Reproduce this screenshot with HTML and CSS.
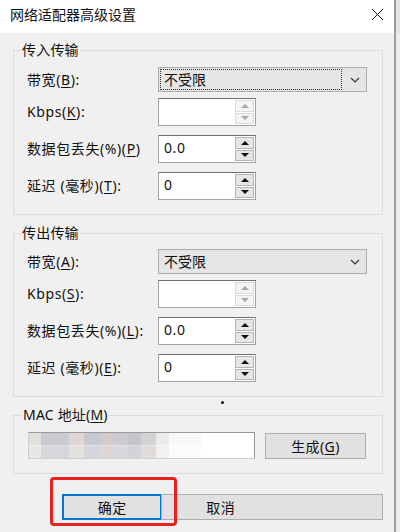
FILE: index.html
```html
<!DOCTYPE html>
<html lang="zh-CN">
<head>
    <meta charset="UTF-8">
    <meta name="viewport" content="width=device-width, initial-scale=1.0">
    <title>网络适配器高级设置</title>
    <link rel="stylesheet" href="styles.css">
</head>
<body>
    <div class="screen">
        <div class="dialog">
            <div class="titlebar">
                <span class="title">网络适配器高级设置</span>
                <svg class="close" width="13" height="13" viewBox="0 0 13 13">
                    <path d="M1 1 L12 12 M12 1 L1 12" stroke="#111" stroke-width="1" fill="none"/>
                </svg>
            </div>
            <div class="body">
                <fieldset class="group">
                    <legend>传入传输</legend>
                    <div class="rows">
                        <div class="row first">
                            <span class="lbl">带宽(<u>B</u>):</span>
                            <div class="select">
                                <span class="sel-text focus">不受限</span>
                                <svg class="chev" width="10" height="6" viewBox="0 0 10 6"><polyline points="1,1 5,5 9,1" fill="none" stroke="#333" stroke-width="1.2"/></svg>
                            </div>
                        </div>
                        <div class="row">
                            <span class="lbl">Kbps(<u>K</u>):</span>
                            <div class="spin off">
                                <span class="spin-val"></span>
                                <span class="spin-btns"><span><i class="up"></i></span><span><i class="down"></i></span></span>
                            </div>
                        </div>
                        <div class="row">
                            <span class="lbl">数据包丢失(%)(<u>P</u>)</span>
                            <div class="spin">
                                <span class="spin-val">0.0</span>
                                <span class="spin-btns"><span><i class="up"></i></span><span><i class="down"></i></span></span>
                            </div>
                        </div>
                        <div class="row">
                            <span class="lbl">延迟 (毫秒)(<u>T</u>):</span>
                            <div class="spin">
                                <span class="spin-val">0</span>
                                <span class="spin-btns"><span><i class="up"></i></span><span><i class="down"></i></span></span>
                            </div>
                        </div>
                    </div>
                </fieldset>

                <fieldset class="group second">
                    <legend>传出传输</legend>
                    <div class="rows">
                        <div class="row first">
                            <span class="lbl">带宽(<u>A</u>):</span>
                            <div class="select">
                                <span class="sel-text">不受限</span>
                                <svg class="chev" width="10" height="6" viewBox="0 0 10 6"><polyline points="1,1 5,5 9,1" fill="none" stroke="#333" stroke-width="1.2"/></svg>
                            </div>
                        </div>
                        <div class="row">
                            <span class="lbl">Kbps(<u>S</u>):</span>
                            <div class="spin off">
                                <span class="spin-val"></span>
                                <span class="spin-btns"><span><i class="up"></i></span><span><i class="down"></i></span></span>
                            </div>
                        </div>
                        <div class="row">
                            <span class="lbl">数据包丢失(%)(<u>L</u>):</span>
                            <div class="spin">
                                <span class="spin-val">0.0</span>
                                <span class="spin-btns"><span><i class="up"></i></span><span><i class="down"></i></span></span>
                            </div>
                        </div>
                        <div class="row">
                            <span class="lbl">延迟 (毫秒)(<u>E</u>):</span>
                            <div class="spin">
                                <span class="spin-val">0</span>
                                <span class="spin-btns"><span><i class="up"></i></span><span><i class="down"></i></span></span>
                            </div>
                        </div>
                    </div>
                </fieldset>

                <div class="dot"></div>

                <fieldset class="group mac">
                    <legend>MAC 地址(<u>M</u>)</legend>
                    <div class="mac-row">
                        <div class="mac-input"><span class="mac-blur"></span></div>
                        <button class="btn gen">生成(<u>G</u>)</button>
                    </div>
                </fieldset>

                <div class="actions">
                    <button class="btn ok">确定</button>
                    <button class="btn cancel">取消</button>
                    <div class="mark"></div>
                </div>
            </div>
        </div>
        <div class="edge"></div>
    </div>
</body>
</html>
```

FILE: styles.css
```css
html, body {
    margin: 0;
    padding: 0;
}
body {
    font-family: "Noto Sans", "Noto Sans CJK SC", sans-serif;
    font-size: 14px;
    color: #111;
    background: #f0f0f0;
}
.screen {
    display: flex;
    width: 400px;
    height: 532px;
    overflow: hidden;
}
.dialog {
    width: 394px;
    background: #f0f0f0;
}
.edge {
    flex: 1;
    border-left: 2px solid #9c9c9c;
    background: linear-gradient(#e4e4e4 0, #e4e4e4 33px, #ececec 33px);
}
.titlebar {
    height: 33px;
    background: #fff;
    display: flex;
    align-items: center;
    justify-content: space-between;
    padding: 0 10px 0 10px;
}
.title {
    font-size: 14px;
    line-height: 18px;
    margin-top: -3px;
}
.close {
    margin-top: -4px;
}
.body {
    padding: 0 11px 0 13px;
}
.group {
    margin: 8px 0 0 0;
    padding: 8px 13px 14px 13px;
    border: 1px solid #dcdcdc;
    min-width: 0;
}
.group legend {
    margin-left: -6px;
    padding: 0 1px;
    line-height: 18px;
    letter-spacing: 0.2px;
}
.group.second {
    margin-top: 9px;
    padding-top: 7px;
}
.rows {
    display: flex;
    flex-direction: column;
    gap: 9px;
}
.row {
    display: flex;
    align-items: center;
}
.row.first {
    margin-bottom: -3px;
}
.lbl {
    width: 131px;
    white-space: nowrap;
    line-height: 18px;
    letter-spacing: 0.6px;
}
u {
    text-underline-offset: 2px;
}
.select {
    width: 209px;
    height: 25px;
    box-sizing: border-box;
    background: #e5e5e5;
    border: 1px solid #adadad;
    display: flex;
    align-items: center;
    padding: 0 6px 0 1px;
}
.sel-text {
    flex: 1;
    height: 21px;
    line-height: 20px;
    padding-left: 3px;
    box-sizing: border-box;
    border: 1px solid transparent;
    margin-right: 8px;
}
.sel-text.focus {
    border: 1px dotted #333;
}
.spin {
    width: 98px;
    height: 28px;
    box-sizing: border-box;
    background: #fff;
    border: 1px solid #a3a3a3;
    border-top-color: #707070;
    display: flex;
}
.spin-val {
    flex: 1;
    padding-left: 5px;
    line-height: 24px;
    font-size: 14px;
    letter-spacing: 0.6px;
}
.spin-btns {
    width: 20px;
    display: flex;
    flex-direction: column;
    gap: 1px;
    padding: 1px 1px 1px 0;
    box-sizing: border-box;
}
.spin-btns span {
    flex: 1;
    background: #e6e6e6;
    border: 1px solid #b4b4b4;
    display: flex;
    align-items: center;
    justify-content: center;
}
.spin.off .spin-btns span {
    background: #f4f4f4;
    border-color: #dadada;
}
.up, .down {
    width: 0;
    height: 0;
    border-left: 4px solid transparent;
    border-right: 4px solid transparent;
}
.up {
    border-bottom: 4px solid #111;
}
.down {
    border-top: 4px solid #111;
}
.spin.off .up {
    border-bottom-color: #a8a8a8;
}
.spin.off .down {
    border-top-color: #a8a8a8;
}
.dot {
    width: 3px;
    height: 3px;
    border-radius: 50%;
    background: #111;
    margin: 4px 0 0 208px;
}
.group.mac {
    margin-top: 2px;
    padding: 8px 13px 14px 14px;
}
.mac-row {
    display: flex;
    align-items: center;
    gap: 10px;
}
.mac-input {
    width: 227px;
    height: 27px;
    box-sizing: border-box;
    background: #fff;
    border: 1px solid #9a9a9a;
    border-left-color: #d0d0d0;
    border-bottom-color: #d0d0d0;
}
.mac-blur {
    display: block;
    width: 172px;
    height: 100%;
    background:
        linear-gradient(to right, #e2e0de 0 12px, #c9cacf 12px 40px, #ddd8d4 40px 55px, #c6cad0 55px 70px, #d2ccc8 70px 84px, #cbccd1 84px 99px, #c5c6cb 99px 112px, #d6d2cf 112px 127px, #e9ebee 127px 140px, #f8f8f8 140px) top / 100% 50% no-repeat,
        linear-gradient(to right, #e8e7e6 0 12px, #d6d7db 12px 40px, #e4e1de 40px 55px, #d3d6db 55px 70px, #dcd7d4 70px 84px, #d7d8dc 84px 99px, #d3d4d8 99px 112px, #dfdcda 112px 127px, #f0f1f3 127px 140px, #fbfbfb 140px) bottom / 100% 50% no-repeat;
}
.btn {
    font-family: inherit;
    font-size: 14px;
    color: #111;
    background: #e1e1e1;
    border: 1px solid #adadad;
    box-sizing: border-box;
    padding: 0;
    height: 26px;
    letter-spacing: 0.4px;
}
.btn.gen {
    width: 101px;
}
.actions {
    position: relative;
    display: flex;
    margin-top: 20px;
    padding-left: 49px;
}
.btn.ok {
    width: 101px;
    border: 2px solid #0078d7;
}
.btn.cancel {
    width: 223px;
    text-align: left;
    padding-left: 44px;
    margin-left: -1px;
}
.mark {
    position: absolute;
    left: 37px;
    top: -17px;
    width: 127px;
    height: 49px;
    box-sizing: border-box;
    border: 3px solid #e8211f;
    border-radius: 4px;
}
```
